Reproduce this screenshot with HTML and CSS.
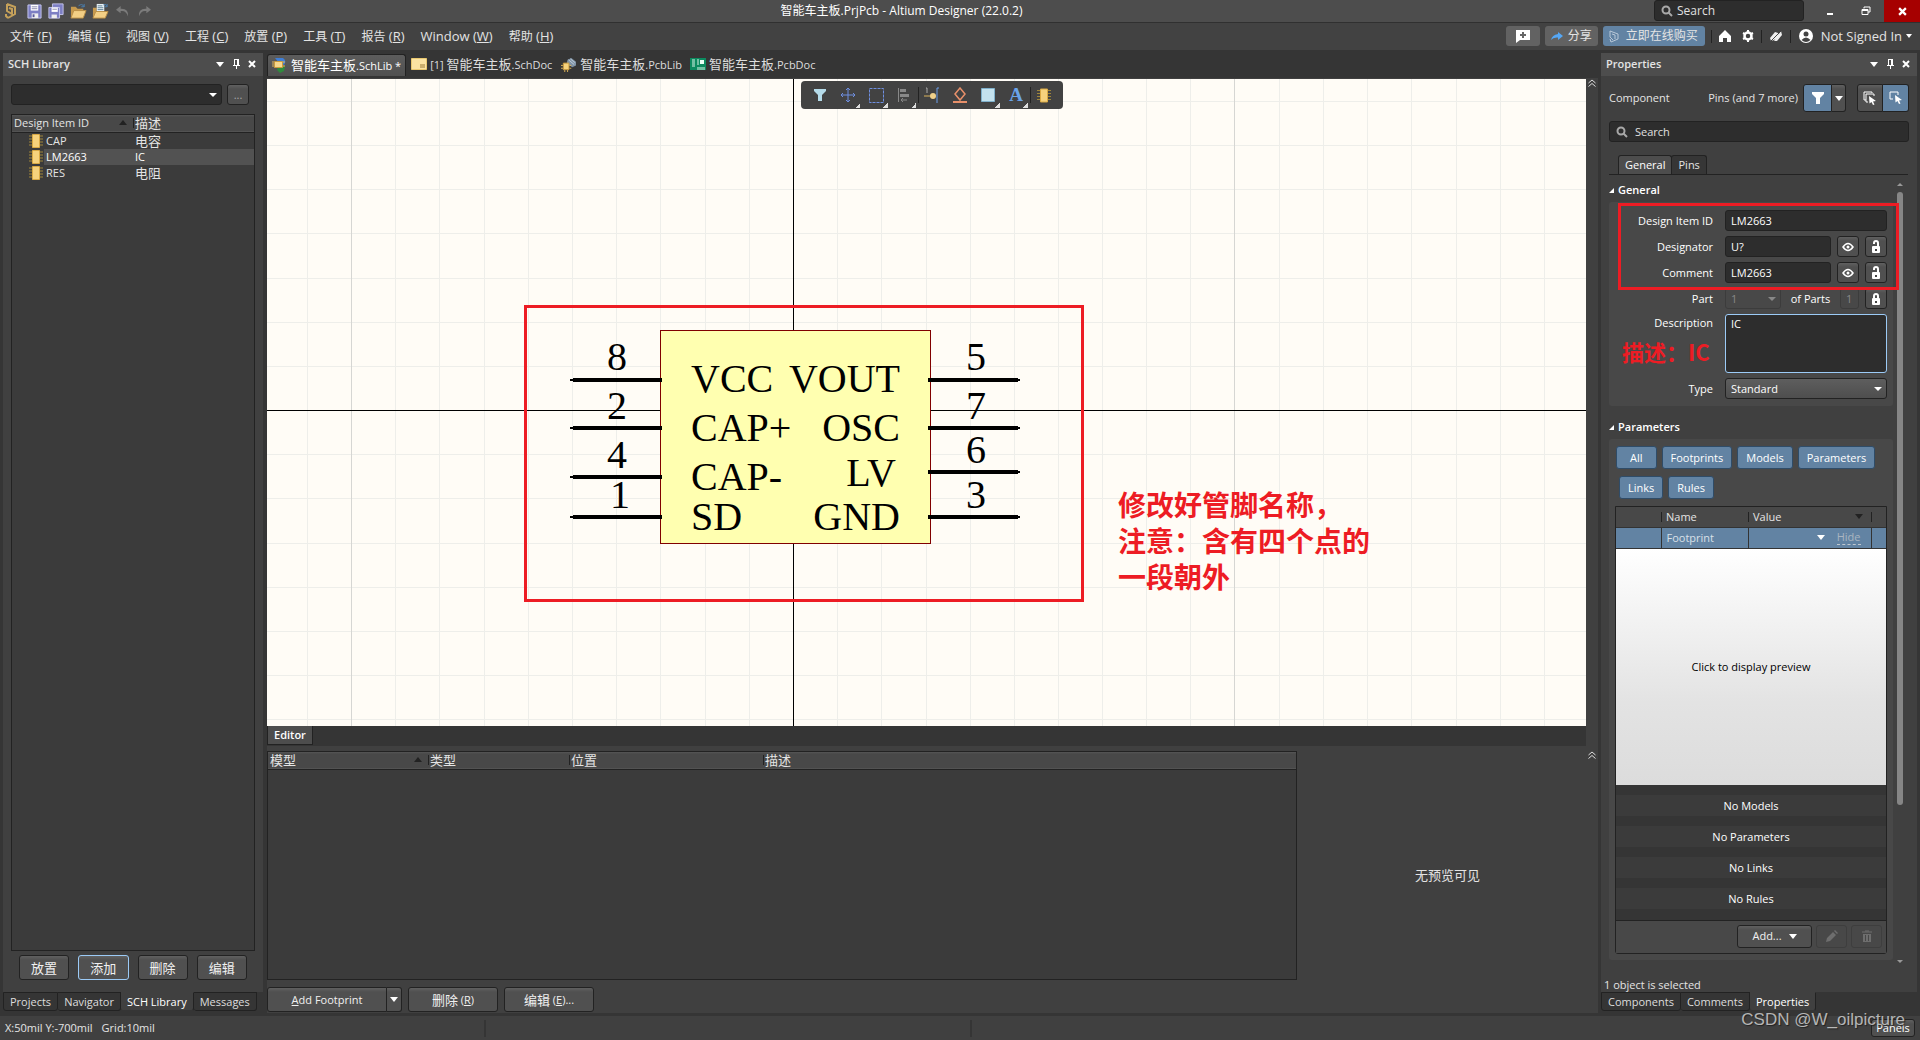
FILE: index.html
```html
<!DOCTYPE html>
<html lang="zh-CN">
<head>
<meta charset="utf-8">
<title>智能车主板.PrjPcb - Altium Designer (22.0.2)</title>
<link rel="stylesheet" href="styles.css">
</head>
<body>
<svg class="defs" aria-hidden="true">
  <symbol id="logo" viewBox="0 0 14 18"><path d="M3 2 L11 5 V12 L4 16 M3 2 V9 L8 12 V7 L5 6 M4 16 L2 14 V12" fill="none" stroke="#c5a15a" stroke-width="2"/></symbol>
  <symbol id="save" viewBox="0 0 16 16"><path d="M1 1h14v14H1z" fill="#7d7fc4" stroke="#c9caf0"/><path d="M4 1h8v6H4z" fill="#fff"/><path d="M5 3h6M5 5h6" stroke="#88a"/><path d="M5 10h7v5H5z" fill="#eee"/><path d="M6 11h2v3H6z" fill="#55579a"/></symbol>
  <symbol id="saveall" viewBox="0 0 18 18"><path d="M5 1h12v12H5z" fill="#7d7fc4" stroke="#c9caf0"/><path d="M1 5h12v12H1z" fill="#7d7fc4" stroke="#c9caf0"/><path d="M4 5h7v5H4z" fill="#fff"/><path d="M5 7h5" stroke="#88a"/><path d="M4 13h6v4H4z" fill="#eee"/></symbol>
  <symbol id="open" viewBox="0 0 18 18"><path d="M1 16V4h5l2 2h6v3" fill="#c79a4e"/><path d="M1 16l3-8h13l-3 8z" fill="#f3cf85" stroke="#b98d45"/><path d="M9 3q4-3 6 1m0-3v3h-3" fill="none" stroke="#4a80b0"/></symbol>
  <symbol id="openprj" viewBox="0 0 18 18"><path d="M1 16V5h4v4" fill="#c79a4e"/><path d="M5 1h8v9H5z" fill="#e9f2f6"/><path d="M6 3h5M6 5h6M6 7h6" stroke="#5c7d90"/><path d="M1 16l3-7h13l-3 7z" fill="#f3cf85" stroke="#b98d45"/><path d="M12 2q3-2 4 2m0-3v3h-3" fill="none" stroke="#4a80b0"/></symbol>
  <symbol id="undo" viewBox="0 0 16 14"><path d="M6 1L1 5l5 4V6.500q6-1 8 6 1-9-8-8.500z" fill="#7b7b7b"/></symbol>
  <symbol id="redo" viewBox="0 0 16 14"><path d="M10 1l5 4-5 4V6.500q-6-1-8 6-1-9 8-8.500z" fill="#7b7b7b"/></symbol>
  <symbol id="mag" viewBox="0 0 12 12"><circle cx="5" cy="5" r="3.500" fill="none" stroke="#a8a8a8" stroke-width="2"/><path d="M7.500 7.500L11 11" stroke="#a8a8a8" stroke-width="2"/></symbol>
  <symbol id="pin" viewBox="0 0 10 10"><path d="M3 0h5v6h1v1H2V6h1zM5 7h1v3H5z" fill="#fff"/><path d="M4 1h2v5H4z" fill="#4d4d4d"/></symbol>
  <symbol id="close" viewBox="0 0 8 8"><path d="M1 1l6 6M7 1L1 7" stroke="#fff" stroke-width="2"/></symbol>
  <symbol id="chip" viewBox="0 0 14 14"><path d="M0 2h14M0 5h14M0 8h14M0 11h14" stroke="#a0863a"/><path d="M3.500 .5h7v13h-7z" fill="#f6d27c" stroke="#d9a944"/></symbol>
  <symbol id="schlib" viewBox="0 0 16 16"><path d="M3 1h8q4 3 1 7l-5-2z" fill="#3f7fd8"/><path d="M6 9h7l-1 5-4 2-3-3z" fill="#2f8a3d"/><path d="M2.500 4.500h8v6h-8z" fill="#f6d78b" stroke="#c99b3e"/><path d="M0 5h2M0 7h2M0 9h2M11 5h2M11 9h2" stroke="#e0b55a"/></symbol>
  <symbol id="schdoc" viewBox="0 0 16 14"><path d="M.5 1.500h15v11H.5z" fill="#fbe3a2" stroke="#e9c870"/><path d="M9 8h5M9 10h5" stroke="#9a7a38"/></symbol>
  <symbol id="pcblib" viewBox="0 0 18 16"><path d="M8 3l4-2 5 4v4l-4 2-6-4z" fill="#7f93a6"/><path d="M9 3l6 5M11 2l5 4" stroke="#bccad6"/><path d="M3.500 6.500h6v7h-6z" fill="#f6d27c" stroke="#c99b3e"/><path d="M1 9h2M1 12h2M10 9h2M10 12h2M5 14v2M8 14v2" stroke="#e0b55a"/></symbol>
  <symbol id="pcbdoc" viewBox="0 0 16 14"><path d="M0 1h16v12H0z" fill="#0c8a5f"/><path d="M2 3h3M2 5h3M2 7h3M2 9h3M7 3h2M7 5h2M7 7h2" stroke="#d8f5e8"/><path d="M10 3h4v4h-4z" fill="#e9fff6"/><path d="M8 10v3M10 10v3M12 10v3M14 10v3" stroke="#d8f5e8"/></symbol>
  <symbol id="funnel" viewBox="0 0 14 14"><path d="M1 1h12v2L9 7v6H5V7L1 3z"/></symbol>
  <symbol id="chev" viewBox="0 0 8 8"><path d="M.5 4L4 1l3.500 3M.5 7.500L4 4.500l3.500 3" fill="none" stroke="#ddd"/></symbol>
  <symbol id="eye" viewBox="0 0 12 10"><path d="M1 5q5-7 10 0q-5 7-10 0z" fill="none" stroke="#fff" stroke-width="1.500"/><circle cx="6" cy="5" r="1.500" fill="#fff"/></symbol>
  <symbol id="unlock" viewBox="0 0 10 14"><path d="M3 4V3q0-2 2-2t2 2v4" fill="none" stroke="#fff" stroke-width="2"/><rect x="1" y="6" width="8" height="7" rx="1" fill="#fff"/><path d="M4 9h2v2H4z" fill="#444"/></symbol>
  <symbol id="lock" viewBox="0 0 10 14"><path d="M3 7V4q0-2 2-2t2 2v3" fill="none" stroke="#fff" stroke-width="2"/><rect x="1" y="6" width="8" height="7" rx="1" fill="#fff"/><path d="M4 9h2v2H4z" fill="#444"/></symbol>
</svg>

<header class="titlebar">
  <div class="quick">
    <svg class="i-logo"><use href="#logo"/></svg>
    <button class="tool" aria-label="Save"><svg width="15" height="15"><use href="#save"/></svg></button>
    <button class="tool" aria-label="Save all"><svg width="16" height="16"><use href="#saveall"/></svg></button>
    <button class="tool" aria-label="Open"><svg width="17" height="17"><use href="#open"/></svg></button>
    <button class="tool" aria-label="Open project"><svg width="17" height="17"><use href="#openprj"/></svg></button>
    <button class="tool" aria-label="Undo"><svg width="15" height="13"><use href="#undo"/></svg></button>
    <button class="tool" aria-label="Redo"><svg width="15" height="13"><use href="#redo"/></svg></button>
  </div>
  <h1 class="title">智能车主板.PrjPcb - Altium Designer (22.0.2)</h1>
  <div class="window">
    <label class="search search-top"><svg width="12" height="12"><use href="#mag"/></svg><input type="text" placeholder="Search" aria-label="Search"></label>
    <button class="win" aria-label="Minimize"><svg width="10" height="10"><path d="M2 8h6" stroke="#fff" stroke-width="2"/></svg></button>
    <button class="win" aria-label="Restore"><svg width="10" height="10"><path d="M3 2.500V1h6v5H7" fill="none" stroke="#fff" stroke-width="1"/><path d="M1 3.500h6v5H1z" fill="none" stroke="#fff" stroke-width="1"/><path d="M1 4h6" stroke="#fff" stroke-width="2"/></svg></button>
    <button class="win win-close" aria-label="Close"><svg width="9" height="9"><use href="#close"/></svg></button>
  </div>
</header>

<nav class="menubar">
  <div class="menus">
    <button class="menu"><span class="zh">文件</span> (<u>F</u>)</button>
    <button class="menu"><span class="zh">编辑</span> (<u>E</u>)</button>
    <button class="menu"><span class="zh">视图</span> (<u>V</u>)</button>
    <button class="menu"><span class="zh">工程</span> (<u>C</u>)</button>
    <button class="menu"><span class="zh">放置</span> (<u>P</u>)</button>
    <button class="menu"><span class="zh">工具</span> (<u>T</u>)</button>
    <button class="menu"><span class="zh">报告</span> (<u>R</u>)</button>
    <button class="menu">Window (<u>W</u>)</button>
    <button class="menu"><span class="zh">帮助</span> (<u>H</u>)</button>
  </div>
  <div class="account">
    <button class="flat flat-icon" aria-label="Comment"><svg width="16" height="14"><path d="M1 1h14v10H5l-4 3z" fill="#fff"/><path d="M8 3v6M5 6h6" stroke="#666" stroke-width="2"/></svg></button>
    <button class="flat"><svg width="12" height="10"><path d="M7 1l5 4-5 4V6.500Q2 6 0 9q1-5 7-6z" fill="#55a7f5"/></svg>分享</button>
    <button class="flat flat-blue"><svg width="12" height="14"><path d="M2 2l8 3v5l-7 3M2 2v6l3 3M4 5l3 1v4M2 10l1 3" fill="none" stroke="#b9c8d8"/></svg>立即在线购买</button>
    <i class="vsep"></i>
    <button class="tool" aria-label="Home"><svg width="12" height="12"><path d="M6 0l6 6v6H8V8H4v4H0V6z" fill="#fff"/></svg></button>
    <button class="tool tool-gap" aria-label="Settings"><svg width="12" height="12"><circle cx="6" cy="6" r="3.500" fill="none" stroke="#fff" stroke-width="2.500"/><path d="M6 0v2M6 10v2M1 3l2 1M9 8l2 1M1 9l2-1M9 4l2-1" stroke="#fff" stroke-width="2"/></svg></button>
    <i class="vsep"></i>
    <button class="tool" aria-label="Connection"><svg width="14" height="12"><path d="M1 8l5-6 3 1 1 3-5 4-3 1zM9 5l3-4 1 4-5 6-3 0z" fill="#eee"/><path d="M1 12L13 0" stroke="#424242" stroke-width="1"/></svg></button>
    <i class="vsep"></i>
    <button class="signin"><svg width="14" height="14"><circle cx="7" cy="7" r="7" fill="#fff"/><circle cx="7" cy="5" r="2.500" fill="#424242"/><path d="M2.500 11q4.500-5 9 0q-4.500 4-9 0z" fill="#424242"/></svg>Not Signed In<i class="caret caret-sm"></i></button>
  </div>
</nav>

<main class="workspace">
  <aside class="panel">
    <header class="panel-head"><h2>SCH Library</h2>
      <button class="tool" aria-label="Panel menu"><i class="caret"></i></button>
      <button class="tool" aria-label="Pin"><svg width="10" height="10"><use href="#pin"/></svg></button>
      <button class="tool" aria-label="Close panel"><svg width="8" height="8"><use href="#close"/></svg></button>
    </header>
    <div class="panel-body lib">
      <div class="lib-filter">
        <span class="select select-dark"><select aria-label="Filter"><option></option></select></span>
        <button class="btn btn-dots">...</button>
      </div>
      <div class="frame">
        <table class="lib-table">
          <colgroup><col class="c-id"><col></colgroup>
          <thead><tr><th>Design Item ID<i class="sort"></i></th><th class="zh">描述</th></tr></thead>
          <tbody>
            <tr><td><svg width="14" height="16"><use href="#chip"/></svg>CAP</td><td class="zh">电容</td></tr>
            <tr class="on"><td><svg width="14" height="16"><use href="#chip"/></svg>LM2663</td><td>IC</td></tr>
            <tr><td><svg width="14" height="16"><use href="#chip"/></svg>RES</td><td class="zh">电阻</td></tr>
          </tbody>
        </table>
      </div>
      <div class="lib-actions">
        <button class="btn zh">放置</button><button class="btn btn-focus zh">添加</button><button class="btn zh">删除</button><button class="btn zh">编辑</button>
      </div>
    </div>
    <nav class="panel-tabs"><button class="ptab">Projects</button><button class="ptab">Navigator</button><button class="ptab ptab-on">SCH Library</button><button class="ptab">Messages</button></nav>
  </aside>

  <section class="center">
    <nav class="doctabs">
      <button class="doctab doctab-on"><svg width="16" height="16"><use href="#schlib"/></svg><span><span class="zh">智能车主板</span>.SchLib *</span></button>
      <button class="doctab"><svg width="16" height="14"><use href="#schdoc"/></svg><span>[1] <span class="zh">智能车主板</span>.SchDoc</span></button>
      <button class="doctab"><svg width="17" height="15"><use href="#pcblib"/></svg><span><span class="zh">智能车主板</span>.PcbLib</span></button>
      <button class="doctab"><svg width="16" height="14"><use href="#pcbdoc"/></svg><span><span class="zh">智能车主板</span>.PcbDoc</span></button>
    </nav>
    <div class="viewrow">
      <div class="canvas">
        <svg class="sheet">
          <path class="grid" d="M40 0v2000M128 0v2000M172 0v2000M217 0v2000M261 0v2000M305 0v2000M349 0v2000M393 0v2000M438 0v2000M482 0v2000M570 0v2000M614 0v2000M659 0v2000M703 0v2000M747 0v2000M791 0v2000M835 0v2000M879 0v2000M923 0v2000M1012 0v2000M1056 0v2000M1100 0v2000M1144 0v2000M1189 0v2000M1233 0v2000M1277 0v2000M0 22h4000M0 66h4000M0 110h4000M0 154h4000M0 199h4000M0 243h4000M0 287h4000M0 375h4000M0 419h4000M0 464h4000M0 508h4000M0 552h4000M0 596h4000M0 640h4000"/>
          <path class="grid-major" d="M84 0v2000M967 0v2000"/>
          <path class="axis" d="M526 0v2000M0 331h4000"/>
          <rect class="body" x="393" y="251" width="270" height="213"/>
          <path class="pins" d="M306 301h89M306 349h89M306 398h89M306 438h89M661 301h90M661 349h90M661 393h90M661 438h90"/>
          <path class="ends" d="M303 301h4M303 349h4M303 398h4M303 438h4M750 301h3M750 349h3M750 393h3M750 438h3"/>
          <g class="pintext">
            <text x="340" y="291">8</text><text x="340" y="340">2</text><text x="340" y="389">4</text><text x="343" y="429">1</text>
            <text x="699" y="291">5</text><text x="699" y="340">7</text><text x="699" y="384">6</text><text x="699" y="429">3</text>
            <text x="424" y="313">VCC</text><text x="424" y="362">CAP+</text><text x="424" y="411">CAP-</text><text x="424" y="451">SD</text>
            <g text-anchor="end"><text x="633" y="313">VOUT</text><text x="633" y="362">OSC</text><text x="629" y="407">LV</text><text x="633" y="451">GND</text></g>
          </g>
          <rect class="mark" x="258" y="227" width="557" height="294"/>
          <g class="note"><text x="851" y="437">修改好管脚名称，</text><text x="851" y="473">注意：含有四个点的</text><text x="851" y="509">一段朝外</text></g>
        </svg>
        <div class="floatbar">
          <button class="fb" aria-label="Filter"><svg width="14" height="14" fill="#b5dbe9"><use href="#funnel"/></svg></button>
          <button class="fb fb-more" aria-label="Move"><svg width="14" height="14"><path d="M7 0v14M0 7h14" stroke="#6f8fe0"/><path d="M5 2l2-2 2 2M5 12l2 2 2-2M2 5L0 7l2 2M12 5l2 2-2 2" fill="none" stroke="#6f8fe0"/></svg></button>
          <button class="fb fb-more" aria-label="Select"><svg width="15" height="15"><path d="M.5 .5h14v14H.5z" fill="none" stroke="#6f8fe0" stroke-dasharray="3 1"/></svg></button>
          <button class="fb fb-more" aria-label="Align"><svg width="14" height="14"><path d="M1.500 0v14" stroke="#888"/><path d="M3 1h6v3H3zM3 6h9v3H3z" fill="#888"/><path d="M4 12h6M6 10l-2 2 2 2" fill="none" stroke="#888"/></svg></button>
          <button class="fb fb-split" aria-label="Pin"><svg width="16" height="16"><path d="M2 1h1v5" fill="none" stroke="#aaa"/><path d="M0 9h7" stroke="#d9b25c" stroke-width="1"/><circle cx="9" cy="9" r="3" fill="#efd08b"/><path d="M15 1h-2v15" fill="none" stroke="#6a9de8"/></svg></button>
          <button class="fb" aria-label="Symbol"><svg width="14" height="16"><path d="M7 1l5 6-5 6-5-6z" fill="none" stroke="#e8906a" stroke-width="1.500"/><path d="M0 15h14" stroke="#e8906a" stroke-width="2"/></svg></button>
          <button class="fb fb-more" aria-label="Rectangle"><svg width="14" height="14"><path d="M.5 .5h13v13H.5z" fill="#c3e2ee" stroke="#7fb1cc"/></svg></button>
          <button class="fb fb-more fb-letter" aria-label="Text">A</button>
          <button class="fb fb-split" aria-label="Part"><svg width="14" height="15"><use href="#chip"/></svg></button>
        </div>
      </div>
      <button class="tool collapse" aria-label="Collapse"><svg width="8" height="8"><use href="#chev"/></svg></button>
    </div>
    <div class="editor-tabs"><button class="editor-tab">Editor</button></div>
    <div class="models">
      <div class="models-list">
        <div class="frame">
          <table class="models-table">
            <colgroup><col class="c-model"><col class="c-type"><col class="c-pos"><col></colgroup>
            <thead><tr><th class="zh">模型<i class="sort"></i></th><th class="zh">类型</th><th class="zh">位置</th><th class="zh">描述</th></tr></thead>
          </table>
        </div>
        <div class="models-actions">
          <span class="split"><button class="btn"><u>A</u>dd Footprint</button><button class="btn" aria-label="More"><i class="caret"></i></button></span>
          <button class="btn"><span class="zh">删除</span>&nbsp;(<u>R</u>)</button>
          <button class="btn"><span class="zh">编辑</span>&nbsp;(<u>E</u>)...</button>
        </div>
      </div>
      <div class="models-preview zh">无预览可见</div>
      <button class="tool collapse" aria-label="Collapse models"><svg width="8" height="8"><use href="#chev"/></svg></button>
    </div>
  </section>

  <aside class="panel">
    <header class="panel-head"><h2>Properties</h2>
      <button class="tool" aria-label="Panel menu"><i class="caret"></i></button>
      <button class="tool" aria-label="Pin"><svg width="10" height="10"><use href="#pin"/></svg></button>
      <button class="tool" aria-label="Close panel"><svg width="8" height="8"><use href="#close"/></svg></button>
    </header>
    <div class="panel-body props">
      <div class="props-head">
        <span class="grow">Component</span><span>Pins (and 7 more)</span>
        <span class="split split-filter"><button class="btn btn-on" aria-label="Filter"><svg width="14" height="14" fill="#fff"><use href="#funnel"/></svg></button><button class="btn" aria-label="Filter options"><i class="caret"></i></button></span>
        <span class="split split-pick"><button class="btn" aria-label="Select all"><svg width="14" height="14"><path d="M3 9H1V1h8v1M5 11H3V3h8v2" fill="none" stroke="#fff"/><path d="M6 5l7 5-3 .5 1.500 3-1.500.5-1.500-3-2 1.500z" fill="#fff"/></svg></button><button class="btn btn-on" aria-label="Select one"><svg width="14" height="14"><path d="M4 8H1V1h8v3" fill="none" stroke="#fff"/><path d="M6 4l7 5-3 .5 1.500 3-1.500.5-1.500-3-2 1.500z" fill="#fff"/></svg></button></span>
      </div>
      <label class="search search-props"><svg width="12" height="12"><use href="#mag"/></svg><input type="text" placeholder="Search" aria-label="Search properties"></label>
      <nav class="subtabs"><button class="subtab subtab-on">General</button><button class="subtab">Pins</button></nav>
      <div class="scroll">
        <div class="scroll-main">
          <h3 class="sec">General</h3>
          <div class="group form">
            <label for="did">Design Item ID</label>
            <div class="field"><input id="did" type="text" value="LM2663"></div>
            <label for="des">Designator</label>
            <div class="field"><input id="des" type="text" value="U?"><button class="btn btn-sq" aria-label="Visible"><svg width="12" height="10"><use href="#eye"/></svg></button><button class="btn btn-sq" aria-label="Unlocked"><svg width="10" height="14"><use href="#unlock"/></svg></button></div>
            <label for="com">Comment</label>
            <div class="field"><input id="com" type="text" value="LM2663"><button class="btn btn-sq" aria-label="Visible"><svg width="12" height="10"><use href="#eye"/></svg></button><button class="btn btn-sq" aria-label="Unlocked"><svg width="10" height="14"><use href="#unlock"/></svg></button></div>
            <label for="part">Part</label>
            <div class="field"><span class="select select-off"><select id="part" disabled><option>1</option></select></span><label class="of" for="parts">of Parts</label><input id="parts" class="parts" type="text" value="1" disabled><button class="btn btn-sq" aria-label="Locked"><svg width="10" height="14"><use href="#lock"/></svg></button></div>
            <label class="top" for="dsc">Description</label>
            <textarea id="dsc">IC</textarea>
            <label for="typ">Type</label>
            <span class="select"><select id="typ"><option>Standard</option></select></span>
            <div class="mark-box"></div>
            <div class="mark-note">描述：IC</div>
          </div>
          <h3 class="sec sec-2">Parameters</h3>
          <div class="group params">
            <div class="chips"><button class="chip chip-all">All</button><button class="chip">Footprints</button><button class="chip">Models</button><button class="chip">Parameters</button></div>
            <div class="chips chips-2"><button class="chip">Links</button><button class="chip">Rules</button></div>
            <div class="ptable">
              <table>
                <colgroup><col class="c-a"><col class="c-b"><col><col class="c-d"></colgroup>
                <thead><tr><th></th><th>Name</th><th>Value<i class="sort sort-down"></i></th><th></th></tr></thead>
                <tbody><tr><td></td><td>Footprint</td><td><span class="val"><i class="caret"></i><a href="#">Hide</a></span></td><td></td></tr></tbody>
              </table>
              <button class="preview">Click to display preview</button>
              <p>No Models</p><p>No Parameters</p><p>No Links</p><p>No Rules</p>
              <div class="pfoot">
                <button class="btn btn-add">Add...<i class="caret"></i></button>
                <button class="btn btn-ghost" disabled aria-label="Edit"><svg width="12" height="12"><path d="M0 12l1-4 6-6 3 3-6 6zM8 1l1-1 3 3-1 1z" fill="#6e6e6e"/></svg></button>
                <button class="btn btn-ghost" disabled aria-label="Delete"><svg width="10" height="12"><path d="M0 2h10M3 1h4" stroke="#6e6e6e" stroke-width="1"/><path d="M1 4h8v8H1z" fill="#6e6e6e"/><path d="M3.500 5v6M6.500 5v6" stroke="#484848"/></svg></button>
              </div>
            </div>
          </div>
        </div>
        <div class="bar"><i class="up"></i><i class="thumb"></i><i class="rest"></i><i class="down"></i></div>
      </div>
      <div class="selected">1 object is selected</div>
    </div>
    <nav class="panel-tabs"><button class="ptab">Components</button><button class="ptab">Comments</button><button class="ptab ptab-on">Properties</button></nav>
  </aside>
</main>

<footer class="status">
  <div class="cell"><span>X:50mil Y:-700mil</span><span>Grid:10mil</span></div>
  <div class="cell"></div>
  <button class="btn btn-panels">Panels</button>
</footer>
<div class="watermark">CSDN @W_oilpicture</div>
</body>
</html>
```
FILE: styles.css
```css
* { box-sizing: border-box; }
body {
  position: relative;
  display: flex;
  flex-direction: column;
  height: 100vh;
  margin: 0;
  overflow: hidden;
  background: #353535;
  color: #e4e4e4;
  font: 11px/16px "Open Sans", "Noto Sans CJK SC", sans-serif;
}
h1, h2, h3, p { margin: 0; font-size: inherit; }
button, input, select, textarea { font: inherit; color: inherit; margin: 0; }
button { padding: 0; border: 0; background: none; display: flex; align-items: center; justify-content: center; white-space: nowrap; }
svg { display: block; flex: none; }
u { text-underline-offset: 1px; }
.defs { position: absolute; width: 0; height: 0; }
.zh { font-family: "Noto Sans CJK SC", sans-serif; font-size: 13px; font-weight: 400; }
.grow { flex: 1; }
.caret { width: 0; height: 0; border: 4px solid transparent; border-top: 5px solid #fff; border-bottom: 0; }
.caret-sm { border-width: 4px 3px 0; margin-left: 4px; }
.vsep { width: 1px; height: 13px; background: #222; }

/* title bar */
.titlebar { display: grid; grid-template-columns: 781fr auto 898fr; align-items: center; height: 23px; flex: none; background: #4d4d4d; border-bottom: 1px solid #303030; }
.quick { display: flex; align-items: center; padding-left: 4px; }
.quick .tool { width: 22px; height: 22px; }
.i-logo { width: 14px; height: 18px; margin-right: 5px; }
.title { color: #fff; font-size: 12px; font-weight: 400; }
.window { display: flex; justify-content: flex-end; height: 22px; margin-bottom: auto; }
.search { display: flex; align-items: center; gap: 4px; padding: 0 6px; height: 21px; background: #2d2d2d; border: 1px solid #222; border-radius: 3px; }
.search input { flex: 1; min-width: 0; padding: 0; border: 0; outline: 0; background: none; }
.search input::placeholder { color: #e0e0e0; opacity: 1; }
.search-top { width: 150px; margin-right: 8px; font-size: 12px; }
.win { width: 36px; height: 22px; }
.win-close { background: #a60000; }

/* menu bar */
.menubar { display: flex; justify-content: space-between; height: 27px; flex: none; padding-bottom: 1px; background: #424242; font-size: 13px; }
.menus { display: flex; gap: 16px; padding-left: 10px; }
.menu { white-space: pre; }
.menubar .zh { font-size: 12px; }
.account { display: flex; align-items: center; gap: 5px; padding-right: 8px; }
.flat { height: 20px; gap: 5px; padding: 0 6px; border-radius: 3px; background: #626262; font-size: 12px; }
.flat-icon { padding: 0 9px; }
.flat-blue { gap: 6px; padding: 0 7px 0 5px; background: #6283a3; }
.account .vsep { margin: 0 1px; }
.account .tool { padding: 0 1px; }
.account .tool-gap { margin-left: 4px; }
.signin { margin-left: 2px; }
.signin svg { margin-right: 8px; }

/* workspace */
.workspace { flex: 1; min-height: 0; display: grid; grid-template-columns: 260px minmax(0, 1fr) 316px; column-gap: 3px; padding: 0 3px; }
.panel { display: flex; flex-direction: column; min-height: 0; padding: 3px 0 1px; }
.panel-head { display: flex; align-items: center; height: 23px; flex: none; padding: 0 3px 1px 5px; background: #4d4d4d; }
.panel-head h2 { flex: 1; font-weight: 600; }
.panel-head .tool { width: 16px; height: 16px; }
.panel-body { flex: 1; min-height: 0; display: flex; flex-direction: column; background: #404040; }
.panel-tabs { display: flex; height: 20px; flex: none; padding-bottom: 1px; }
.ptab { padding: 0 6px; border: 1px solid #222; border-left-width: 0; border-radius: 0 0 3px 3px; color: #ddd; }
.ptab:first-child { border-left-width: 1px; }
.ptab-on { background: #404040; color: #fff; border-top-color: #404040; border-bottom-color: #353535; }

.btn { height: 22px; border: 1px solid #222; border-radius: 3px; background: linear-gradient(#606060, #505050 4px); color: #f0f0f0; }
.btn-on { background: #6283a3; }
.frame { flex: 1; min-height: 0; border: 1px solid #222; background: #3b3b3b; }
table { width: 100%; table-layout: fixed; border-collapse: collapse; }
th, td { padding: 0; text-align: left; font-weight: 400; white-space: nowrap; }
th { position: relative; }
th + th { background: linear-gradient(#222, #222) no-repeat 0 center / 1px 10px; }
thead tr { background: linear-gradient(#565656, #484848 2px); border-bottom: 1px solid #222; }
.sort { float: right; width: 0; height: 0; margin: 5px 6px 0 0; border: 4px solid transparent; border-bottom: 5px solid #222; border-top: 0; }
.sort-down { border-top: 5px solid #222; border-bottom: 0; margin-right: 8px; }

/* selects */
.select { display: grid; align-items: center; flex: 1; min-width: 0; }
.select::after { content: ""; grid-area: 1 / 1; justify-self: end; margin-right: 5px; border: 4px solid transparent; border-top: 4px solid #fff; border-bottom: 0; pointer-events: none; }
.select select { grid-area: 1 / 1; width: 100%; height: 21px; padding: 0 5px; appearance: none; border: 1px solid #222; border-radius: 3px; background: linear-gradient(#5e5e5e, #4e4e4e); outline: 0; }
.select-dark select { background: #2d2d2d; }
.select-off { flex: none; width: 56px; }
.select-off select { background: #484848; border-color: #3c3c3c; color: #888; opacity: 1; }
.select-off::after { border-top-color: #888; }

/* SCH library */
.lib { padding: 8px 8px 12px; }
.lib-filter { display: flex; gap: 5px; height: 21px; padding-right: 6px; margin-bottom: 9px; }
.btn-dots { width: 22px; height: 21px; color: #aaa; }
.lib-table .c-id { width: 121px; }
.lib-table th { height: 17px; padding-left: 2px; }
.lib-table td { height: 16px; line-height: 16px; padding-left: 2px; }
.lib-table td:first-child { display: flex; gap: 3px; padding-left: 17px; }
.lib-table .on td { background: #525252; color: #fff; }
.lib-table .on td:first-child { background: linear-gradient(90deg, #3b3b3b 32px, #525252 32px); }
.lib-actions { display: flex; gap: 9px; padding: 4px 8px 0; }
.lib-actions .btn { flex: 1; height: 25px; }
.btn-focus { border-color: #9ccbf7; }

/* document area */
.center { display: flex; flex-direction: column; min-width: 0; min-height: 0; margin-left: 1px; }
.doctabs { display: flex; gap: 5px; height: 29px; flex: none; padding: 4px 0 2px; border-bottom: 1px solid #404040; }
.doctab { gap: 3px; padding: 0 3px 2px 0; color: #ddd; }
.doctab-on { padding: 0 4px 1px; background: linear-gradient(#5c5c5c, #505050); border: 1px solid #222; border-radius: 3px 3px 0 0; border-bottom: 0; color: #fff; }
.viewrow { display: flex; flex: 1; min-height: 0; }
.canvas { position: relative; flex: 1; min-width: 0; background: #fffcf6; }
.sheet { width: 100%; height: 100%; shape-rendering: crispEdges; }
.collapse { width: 12px; height: 8px; flex: none; align-self: flex-start; }
.viewrow, .models { background: #404040; }
.grid, .grid-major, .axis { fill: none; stroke: #eeeeea; stroke-width: 1; }
.grid-major { stroke: #d6d6d3; }
.axis { stroke: #000; }
.body { fill: #ffffb0; stroke: #800000; }
.pins { stroke: #000; stroke-width: 4; }
.ends { stroke: #000; stroke-width: 2; }
.pintext { font: 40px "Liberation Serif", serif; fill: #000; }
.mark { fill: none; stroke: #ed1c24; stroke-width: 3; }
.note { font: 700 28px "Noto Sans CJK SC", sans-serif; fill: #ed1c24; }
.floatbar { position: absolute; left: 534px; top: 2px; display: flex; height: 28px; padding: 0 5px; border-radius: 4px; background: #424242; }
.fb { width: 28px; height: 28px; }
.fb-more { background: linear-gradient(135deg, transparent 50%, #ddd 50%) no-repeat 21px 22px / 5px 5px; }
.fb-split { background: linear-gradient(#222, #222) no-repeat 0 center / 1px 16px; }
.fb-letter { font: 700 19px "Liberation Serif", serif; color: #6aa4ea; }
.editor-tabs { display: flex; height: 20px; flex: none; margin-right: 12px; background: #353535; box-shadow: 12px 0 #404040; }
.editor-tab { padding: 0 6px; height: 19px; border: 1px solid #222; border-top: 0; background: #4d4d4d; color: #fff; font-weight: 600; }
.models { display: flex; height: 267px; flex: none; padding-top: 5px; }
.models-list { display: flex; flex-direction: column; flex: 1030; min-width: 0; }
.models-preview { flex: 277; display: flex; align-items: center; justify-content: center; padding: 0 0 14px 12px; }
.models-table th { height: 17px; line-height: 16px; padding-left: 2px; }
.models-table .c-model { width: 160px; }
.models-table .c-type { width: 141px; }
.models-table .c-pos { width: 194px; }
.models-actions { display: flex; gap: 6px; padding: 7px 0 1px; }
.models-actions .btn { width: 90px; height: 25px; }
.split { display: flex; }
.split .btn:first-child { border-radius: 3px 0 0 3px; }
.split .btn:last-child { border-radius: 0 3px 3px 0; border-left-width: 0; }
.models-actions .split .btn:first-child { width: 120px; }
.models-actions .split .btn:last-child { width: 15px; }

/* properties */
.props { padding: 8px 8px 0; }
.props-head { display: flex; align-items: center; height: 28px; }
.split-filter { margin-left: 5px; }
.split-filter .btn { height: 28px; width: 29px; }
.split-filter .btn:last-child { width: 14px; }
.split-pick { margin-left: 11px; }
.split-pick .btn { height: 28px; width: 26px; }
.split .btn-on { background: #6283a3; }
.search-props { margin: 9px 0 13px; gap: 7px; }
.subtabs { display: flex; height: 20px; flex: none; padding: 0 9px; margin-right: 1px; border-bottom: 1px solid #222; }
.subtab { padding: 0 6px; border: 1px solid #222; border-bottom: 0; border-radius: 3px 3px 0 0; margin-right: -1px; background: #363636; }
.subtab-on { background: #4d4d4d; color: #fff; }
.scroll { flex: 1; min-height: 0; display: flex; padding-bottom: 4px; }
.scroll-main { flex: 1; min-width: 0; }
.sec { display: flex; align-items: center; gap: 4px; height: 24px; margin-top: 3px; color: #fff; font-weight: 600; }
.sec::before { content: ""; width: 0; height: 0; border-left: 5px solid transparent; border-bottom: 5px solid #fff; }
.sec-2 { margin-top: 9px; }
.group { background: #484848; border-radius: 3px; }
.form { position: relative; display: grid; grid-template-columns: 104px minmax(0, 1fr); gap: 5px 12px; align-items: center; padding: 8px 6px 7px 0; color: #fff; }
.form > label { text-align: right; }
.form > .top { align-self: start; padding-top: 1px; }
.field { display: flex; gap: 6px; height: 21px; }
.field input, .form textarea { flex: 1; min-width: 0; padding: 0 5px; border: 1px solid #222; border-radius: 3px; background: #2d2d2d; outline: 0; }
.form textarea { display: block; width: 100%; height: 59px; padding-top: 1px; border-color: #9ccbf7; resize: none; }
.btn-sq { flex: none; width: 22px; height: 21px; }
.field .of { flex: 1; text-align: center; line-height: 21px; margin: 0 -6px; }
.field .parts { flex: none; width: 19px; background: #484848; border-color: #3c3c3c; color: #888; }
.mark-box { position: absolute; left: 9px; top: 1px; width: 281px; height: 87px; border: 3px solid #ed1c24; pointer-events: none; }
.mark-note { position: absolute; left: 13px; top: 133px; color: #ed1c24; font: 700 22px/32px "Noto Sans CJK SC", sans-serif; }
.params { padding: 7px 6px 6px; }
.chips { display: flex; gap: 5px; padding-left: 1px; margin-bottom: 7px; }
.chips-2 { padding-left: 4px; }
.chip { height: 23px; padding: 0 8px; border: 1px solid #2f4c68; border-radius: 3px; background: #6283a3; color: #fff; }
.chip-all { padding: 0 13px; }
.ptable { border: 1px solid #222; border-radius: 0 0 3px 3px; background: #353535; }
.ptable .c-a { width: 45px; }
.ptable .c-b { width: 87px; }
.ptable .c-d { width: 15px; }
.ptable th { height: 20px; padding-left: 5px; }
.ptable thead tr { background: #484848; }
.ptable td { height: 21px; padding-left: 5px; background: #6283a3; border: 1px solid #333; color: #d8e0e8; }
.ptable td:first-child { border-left: 0; }
.ptable td:last-child { border-right: 0; }
.val { display: flex; align-items: center; justify-content: flex-end; gap: 12px; padding-right: 10px; }
.val a { color: #a9b5c0; text-decoration: none; line-height: 14px; border-bottom: 1px dashed #c0c8d0; }
.preview { width: 100%; height: 236px; background: linear-gradient(#fff, #e3e3e3 65%, #dcdcdc); color: #000; }
.ptable p { height: 21px; margin-top: 10px; line-height: 21px; text-align: center; background: #3b3b3b; color: #fff; }
.pfoot { display: flex; gap: 4px; justify-content: flex-end; height: 33px; margin-top: 11px; padding: 4px; border-top: 1px solid #222; background: #484848; }
.btn-add { width: 75px; height: 23px; gap: 7px; }
.pfoot .btn-ghost { width: 31px; height: 23px; background: none; border-color: #3e3e3e; }
.bar { width: 16px; flex: none; display: flex; flex-direction: column; align-items: center; padding: 8px 4px 0 2px; }
.bar .up { border: 3px solid transparent; border-bottom: 3px solid #999; border-top: 0; margin-bottom: 6px; }
.bar .thumb { flex: 612; width: 6px; border-radius: 3px; background: #868686; }
.bar .rest { flex: 155; }
.bar .down { border: 3px solid transparent; border-top: 3px solid #999; border-bottom: 0; }
.selected { height: 25px; flex: none; margin-left: -5px; padding-top: 10px; line-height: 16px; }

/* status bar */
.status { display: flex; align-items: center; height: 27px; flex: none; border-top: 3px solid #353535; background: #404040; }
.cell { display: flex; gap: 9px; width: 486px; height: 17px; padding-left: 5px; border-right: 2px solid #353535; }
.btn-panels { margin-left: auto; margin-right: 5px; width: 44px; height: 18px; color: #fff; }
.watermark { position: absolute; right: 15px; bottom: 10px; color: rgba(225, 225, 225, .75); font: 17px/20px "Liberation Sans", Arial, sans-serif; text-shadow: 1px 1px 1px #222; pointer-events: none; }
```
